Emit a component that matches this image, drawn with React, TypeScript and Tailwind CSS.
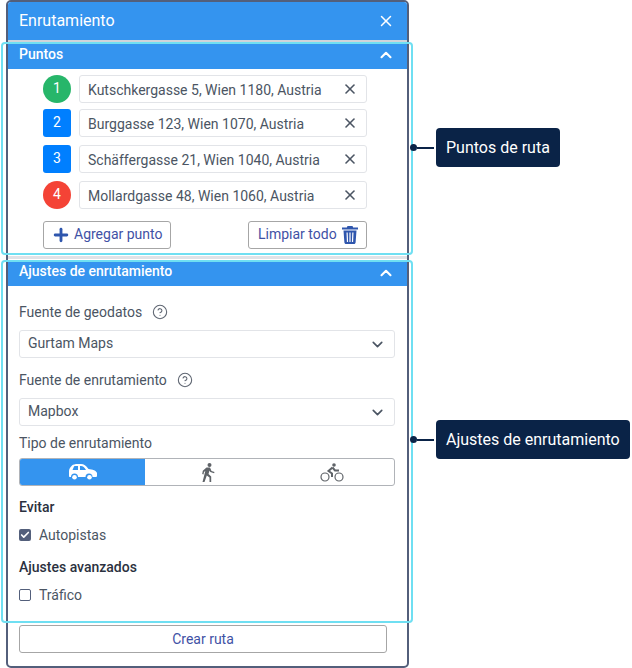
import { Check, ChevronDown, ChevronUp, CircleHelp, Plus, X } from "lucide-react";

const points = [
  { n: 1, label: "Kutschkergasse 5, Wien 1180, Austria", badge: "bg-[#27b66a] rounded-full", mt: "mt-[6px]" },
  { n: 2, label: "Burggasse 123, Wien 1070, Austria", badge: "bg-[#007fff] rounded-[3px]", mt: "mt-[6px]" },
  { n: 3, label: "Schäffergasse 21, Wien 1040, Austria", badge: "bg-[#007fff] rounded-[3px]", mt: "mt-[8px]" },
  { n: 4, label: "Mollardgasse 48, Wien 1060, Austria", badge: "bg-[#f44336] rounded-full", mt: "mt-[8px]" },
];

function SectionHeader({ title, tall }: { title: string; tall?: boolean }) {
  return (
    <div className={`flex items-center justify-between bg-[#3494ef] pl-[11px] pr-[12px] text-[14px] font-medium text-white ${tall ? "h-[27px]" : "h-[25px]"}`}>
      <span className={tall ? "-mt-[3px]" : "-mt-[4px]"}>{title}</span>
      <ChevronUp className={`h-[18px] w-[18px] ${tall ? "-mt-[1px]" : "-mt-[2px]"}`} strokeWidth={2.800} />
    </div>
  );
}

function SelectBox({ value }: { value: string }) {
  return (
    <div className="flex h-[28px] w-[376px] items-center justify-between rounded-[3px] border border-[#e2e4e8] pl-[8px] pr-[8px] text-[14px] text-[#4b5563]">
      <span className="-mt-[1px]">{value}</span>
      <ChevronDown className="h-[17px] w-[17px] text-[#4b5563]" strokeWidth={2.300} />
    </div>
  );
}

function Callout({ text, top }: { text: string; top: string }) {
  return (
    <div className={`absolute left-[410px] flex items-center ${top}`}>
      <span className="h-[7px] w-[7px] rounded-full bg-[#0a2347]" />
      <span className="h-[2px] w-[17px] bg-[#0a2347]" />
      <span className="ml-[2px] flex h-[39px] items-center rounded-[4px] bg-[#0a2347] px-[10px] text-[16px] text-white">{text}</span>
    </div>
  );
}

function CarIcon() {
  return (
    <svg width="28" height="16" viewBox="0 0 28 16" fill="currentColor">
      <path d="M3 1.500C4 .5 6 0 9 0h3c3 0 5 1.500 7.500 5 4 .5 8 1.500 8.500 4v2.500c0 1-.5 1.500-1.500 1.500h-3a3.500 3.500 0 0 0-7 0H9a3.500 3.500 0 0 0-7 0H1c-.7 0-1-.5-1-1.500V7c0-2 1.500-4 3-5.500zM5 2.500 3.500 6H9V2H6.500C5.800 2 5.300 2 5 2.500zM11 2v4h6c-1.500-2.500-3-4-5-4h-1z" fillRule="evenodd" />
      <circle cx="5.500" cy="13.300" r="2.300" />
      <circle cx="20.500" cy="13.300" r="2.300" />
    </svg>
  );
}

function WalkIcon() {
  return (
    <svg width="15" height="19" viewBox="0 0 15 19" fill="#5f6368">
      <circle cx="9.500" cy="2" r="2" />
      <path d="M6.500 4.500h3.500l1.500 3.500 3 1-.4 1.200-3.800-1.200-.8-1.500-1 3.500 2.700 2.500V19H9.500v-4.500L6.800 12.500 4.500 19H2.500L5.300 8 4 9l-.5 2.500L2.200 11l.6-3.200z" />
    </svg>
  );
}

function CycleIcon() {
  return (
    <svg width="24" height="19" viewBox="0 0 24 19" fill="none" stroke="#5f6368" strokeWidth="1.200">
      <circle cx="5" cy="14" r="4" />
      <circle cx="19" cy="14" r="4" />
      <circle cx="14" cy="2" r="1.800" fill="#5f6368" stroke="none" />
      <path d="M12.500 4.500 8.500 8l3.500 2.500V14M12.500 4.500l2.500 3h4" strokeWidth="2" />
    </svg>
  );
}

function TrashIcon() {
  return (
    <svg width="16" height="18" viewBox="0 0 16 18" fill="#2f56ad">
      <path d="M5.500 0h5l.7 1.500H16v2H0v-2h4.800z" />
      <path fillRule="evenodd" d="M1.500 4.500h13l-.9 12c-.1.900-.7 1.500-1.600 1.500H4c-.9 0-1.500-.6-1.600-1.500zM4.500 6.500l.4 9.500h1.200l-.4-9.500zM7.400 6.500V16h1.200V6.500zM10.300 6.500 9.900 16h1.200l.4-9.500z" />
    </svg>
  );
}

export default function App() {
  return (
    <div className="relative h-[668px] w-[632px] overflow-hidden bg-white font-['Roboto',sans-serif]">
      {/* Panel */}
      <div className="ml-[6px] flex h-[668px] w-[403px] flex-col rounded-[5px] border-2 border-[#535f7b] bg-white">
        <div className="flex h-[38px] items-center justify-between rounded-t-[3px] bg-[#3494ef] pl-[11px] pr-[12px] text-[16px] text-white">
          <span>Enrutamiento</span>
          <X className="h-[18px] w-[18px]" strokeWidth={2} />
        </div>
        <div className="h-[2px] bg-[#cfd3da]" />

        {/* Puntos */}
        <SectionHeader title="Puntos" tall />
        {points.map((p) => (
          <div key={p.n} className={`ml-[35px] flex h-[28px] gap-[8px] ${p.mt}`}>
            <div className={`flex h-[28px] w-[28px] items-center justify-center pb-[2px] text-[14px] text-white ${p.badge}`}>{p.n}</div>
            <div className="flex w-[288px] items-center justify-between rounded-[3px] border border-[#e2e4e8] pl-[8px] pr-[8px] text-[14px] text-[#4b5563]">
              <span className="mt-[2px]">{p.label}</span>
              <X className="h-[16px] w-[16px] text-[#4b5563]" strokeWidth={2.400} />
            </div>
          </div>
        ))}
        <div className="ml-[35px] mt-[12px] flex w-[324px] justify-between">
          <button type="button" className="flex h-[28px] w-[128px] items-center rounded-[3px] border border-[#a6a6a6] pl-[7px] text-[14px] text-[#3f51a5]">
            <Plus className="mr-[3px] h-[20px] w-[20px] text-[#2f56ad]" strokeWidth={3.400} />
            <span className="-mt-[1px]">Agregar punto</span>
          </button>
          <button type="button" className="flex h-[28px] w-[119px] items-center rounded-[3px] border border-[#a6a6a6] pl-[9px] text-[14px] text-[#3f51a5]">
            <span className="-mt-[1px]">Limpiar todo</span>
            <span className="ml-[5px]">
              <TrashIcon />
            </span>
          </button>
        </div>
        <div className="mt-[7px] h-[3px] bg-[#dfe2e7]" />

        {/* Ajustes de enrutamiento */}
        <div className="mt-[2px]">
          <SectionHeader title="Ajustes de enrutamiento" />
        </div>
        <div className="flex flex-1 flex-col pl-[11px] text-[14px] text-[#4b5563]">
          <div className="mt-[17px] flex h-[18px] items-center">
            Fuente de geodatos
            <CircleHelp className="ml-[10px] h-[16px] w-[16px] text-[#5f6672]" strokeWidth={1.600} />
          </div>
          <div className="mt-[9px]">
            <SelectBox value="Gurtam Maps" />
          </div>
          <div className="mt-[13px] flex h-[18px] items-center">
            Fuente de enrutamiento
            <CircleHelp className="ml-[10px] h-[16px] w-[16px] text-[#5f6672]" strokeWidth={1.600} />
          </div>
          <div className="mt-[9px]">
            <SelectBox value="Mapbox" />
          </div>
          <div className="mt-[8px] flex h-[18px] items-center">Tipo de enrutamiento</div>
          <div className="mt-[6px] flex h-[28px] w-[376px] overflow-hidden rounded-[3px] border border-[#b0b3b8]">
            <div className="flex w-[125px] items-center justify-center bg-[#3494ef] text-white">
              <CarIcon />
            </div>
            <div className="flex w-[125px] items-center justify-center">
              <WalkIcon />
            </div>
            <div className="flex flex-1 items-center justify-center">
              <CycleIcon />
            </div>
          </div>
          <div className="mt-[11px] h-[18px] font-medium text-[#2b3140]">Evitar</div>
          <label className="mt-[11px] flex h-[18px] items-center gap-[8px]">
            <span className="flex h-[12px] w-[12px] items-center justify-center rounded-[2px] bg-[#535f7b]">
              <Check className="h-[10px] w-[10px] text-white" strokeWidth={4} />
            </span>
            Autopistas
          </label>
          <div className="mt-[13px] h-[18px] font-medium text-[#2b3140]">Ajustes avanzados</div>
          <label className="mt-[11px] flex h-[18px] items-center gap-[8px]">
            <span className="h-[12px] w-[12px] rounded-[2px] border border-[#535f7b]" />
            Tráfico
          </label>
          <button type="button" className="mt-[21px] h-[28px] w-[368px] rounded-[3px] border border-[#a6a6a6] text-[14px] text-[#3f51a5]">
            Crear ruta
          </button>
        </div>
      </div>

      {/* Highlight frames */}
      <div className="absolute left-[1px] top-[42px] h-[213px] w-[412px] rounded-[4px] border-2 border-[#6fdff2]" />
      <div className="absolute left-[1px] top-[260px] h-[363px] w-[412px] rounded-[4px] border-2 border-[#6fdff2]" />

      <Callout text="Puntos de ruta" top="top-[128px]" />
      <Callout text="Ajustes de enrutamiento" top="top-[420px]" />
    </div>
  );
}
